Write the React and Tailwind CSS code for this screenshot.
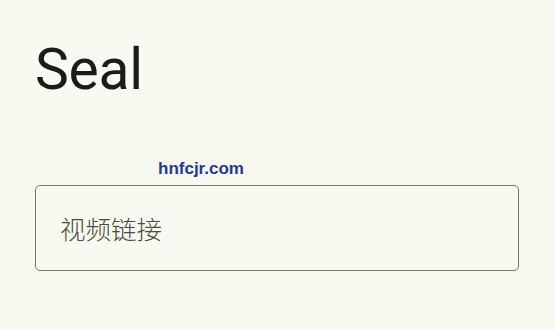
import React from "react";

export default function App() {
  return (
    <div className="w-[555px] h-[330px] bg-[#f9f9f1] px-[35px] pt-[38px] overflow-hidden" style={{ fontFamily: "Roboto, 'Noto Sans CJK SC', sans-serif" }}>
      <h1 className="text-[57px] leading-[64px] text-[#1b1c17] font-normal tracking-[-0.25px]">Seal</h1>
      <div className="mt-[52px] pl-[123px] h-[30px] flex items-end">
        <span className="text-[17px] leading-[20px] font-bold text-[#1c3a9c] pb-[5px]" style={{ fontFamily: "'Liberation Sans', sans-serif" }}>hnfcjr.com</span>
      </div>
      <div className="mt-[1px] w-[484px] h-[86px] border border-[#76786c] rounded-[5px] flex items-center pl-[24px]">
        <span className="text-[25.5px] leading-[30px] font-light text-[#4a4c43]" style={{ fontFamily: "'Noto Sans CJK SC', sans-serif" }}>视频链接</span>
      </div>
    </div>
  );
}
